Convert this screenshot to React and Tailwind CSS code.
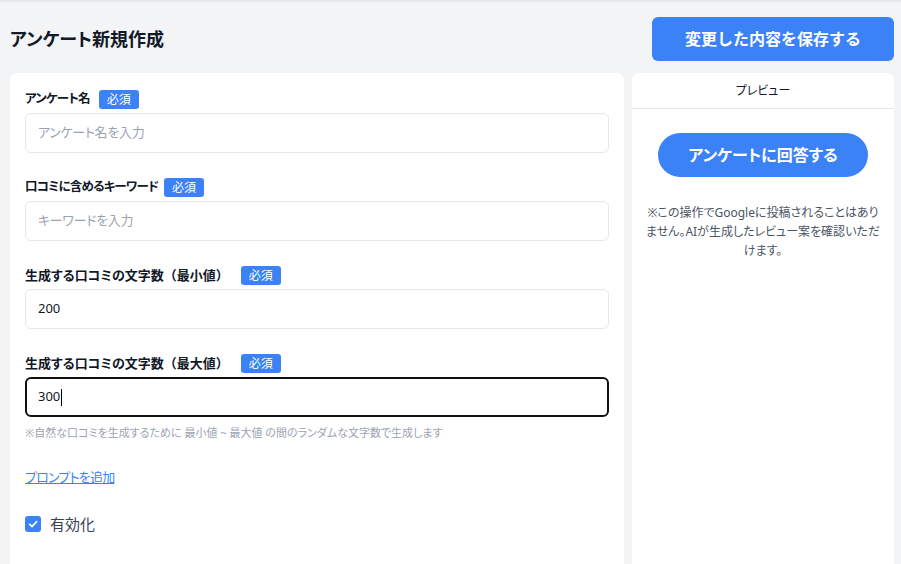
import React from "react";

function Badge() {
  return (
    <span className="inline-flex items-center justify-center h-[19px] px-[8px] rounded-[3px] bg-[#3b82f6] text-white text-[12px] leading-none tracking-normal">
      必須
    </span>
  );
}

function Field({ label, paren, placeholder, value, focused, gap = "gap-[9px]" }) {
  return (
    <div className="flex flex-col gap-[4px]">
      <div className={`flex items-center ${gap} h-[19px]`}>
        {paren ? (
          <span className="text-[13px] font-bold text-[#111827]">
            {label}
            <span className="[font-feature-settings:normal]">{paren}</span>
          </span>
        ) : (
          <span className="text-[12.5px] tracking-[-0.8px] font-bold text-[#111827]">{label}</span>
        )}
        <Badge />
      </div>
      <div
        className={
          focused
            ? "h-[40px] rounded-[6px] border-2 border-[#111111] flex items-center px-[11px]"
            : "h-[40px] rounded-[6px] border border-[#e5e7eb] flex items-center px-[12px]"
        }
      >
        {value ? (
          <span className="text-[13px] text-[#111827] flex items-center">
            {value}
            {focused && <span className="inline-block w-px h-[17px] bg-black ml-px" />}
          </span>
        ) : (
          <span className="text-[13px] text-[#9ca3af] tracking-[-0.3px]">{placeholder}</span>
        )}
      </div>
    </div>
  );
}

export default function App() {
  return (
    <div
      className="w-[901px] h-[564px] overflow-hidden bg-[#f3f4f6] flex flex-col [font-feature-settings:'palt']"
      style={{ fontFamily: '"Noto Sans", "Noto Sans CJK JP", sans-serif' }}
    >
      <div className="h-[3px] bg-gradient-to-b from-[#e2e4e8] to-[#f3f4f6] shrink-0" />
      <div className="flex items-center justify-between pl-[10px] pr-[7px] mt-[14px]">
        <h1 className="text-[18px] font-bold text-[#111827]">アンケート新規作成</h1>
        <button className="w-[242px] h-[44px] rounded-[6px] bg-[#3b82f6] text-white text-[16px] font-bold [font-feature-settings:normal]">
          変更した内容を保存する
        </button>
      </div>
      <div className="flex gap-[8px] pl-[10px] mt-[12px] flex-1">
        <div className="w-[614px] bg-white rounded-t-[8px] px-[15px] pt-[17px] flex flex-col">
          <Field label="アンケート名" placeholder="アンケート名を入力" />
          <div className="h-[25px]" />
          <Field label="口コミに含めるキーワード" placeholder="キーワードを入力" gap="gap-[6px]" />
          <div className="h-[25px]" />
          <Field label="生成する口コミの文字数" paren="（最小値）" value="200" gap="gap-[12px]" />
          <div className="h-[25px]" />
          <Field label="生成する口コミの文字数" paren="（最大値）" value="300" focused gap="gap-[12px]" />
          <p className="text-[11px] text-[#9ca3af] mt-[8px]">
            ※自然な口コミを生成するために 最小値 ~ 最大値 の間のランダムな文字数で生成します
          </p>
          <a href="#" className="mt-[26px] text-[13px] tracking-[-0.8px] text-[#3b82f6] underline w-fit">
            プロンプトを追加
          </a>
          <label className="mt-[26px] flex items-center gap-[9px]">
            <span className="w-[16px] h-[16px] rounded-[3px] bg-[#3b82f6] flex items-center justify-center">
              <svg width="12" height="12" viewBox="0 0 12 12" fill="none">
                <path d="M2.5 6.2 L5 8.6 L9.6 3.6" stroke="white" strokeWidth="1.6" strokeLinecap="round" strokeLinejoin="round" />
              </svg>
            </span>
            <span className="text-[15px] text-[#374151]">有効化</span>
          </label>
        </div>
        <div className="w-[262px] bg-white rounded-t-[8px] flex flex-col">
          <div className="h-[36px] border-b border-[#e5e7eb] flex items-center justify-center text-[12px] text-[#111827]">
            プレビュー
          </div>
          <div className="flex justify-center mt-[24px]">
            <button className="w-[210px] h-[44px] rounded-full bg-[#3b82f6] text-white text-[16px] font-bold">
              アンケートに回答する
            </button>
          </div>
          <p className="mt-[26px] px-[10px] text-center text-[12px] leading-[19px] text-[#4b5563]">
            ※この操作でGoogleに投稿されることはありません。AIが生成したレビュー案を確認いただけます。
          </p>
        </div>
      </div>
    </div>
  );
}
